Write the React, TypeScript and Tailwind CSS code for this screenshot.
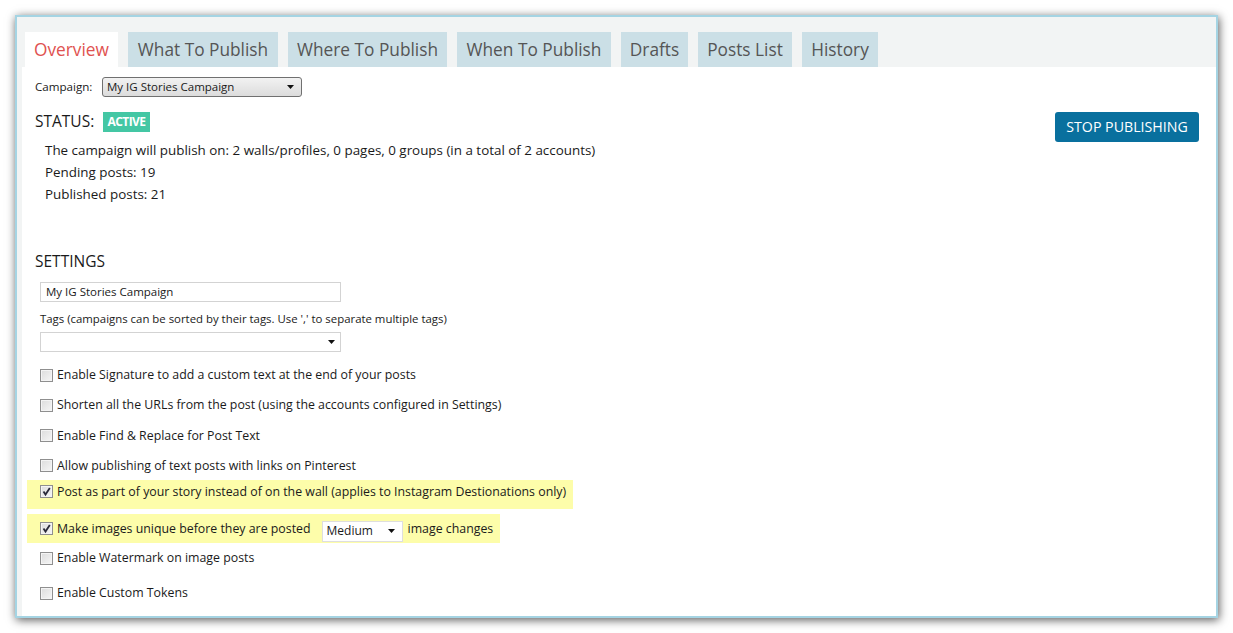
import React from "react";

const FONT = { fontFamily: '"Open Sans", "Noto Sans", sans-serif' };

function Checkbox({ checked = false }: { checked?: boolean }) {
  return (
    <span className="relative inline-block w-[13px] h-[13px] shrink-0 border border-[#8f8f8f] bg-gradient-to-br from-[#dcdcdc] to-[#f6f6f6] shadow-[inset_0_0_0_1px_#f4f4f4]">
      {checked && (
        <svg viewBox="0 0 13 13" className="absolute left-[-1px] top-[-1px] w-[13px] h-[13px]">
          <path d="M3.5 6.5 L5.5 9.5 L9.8 3" fill="none" stroke="#2a2a3a" strokeWidth="1.8" />
        </svg>
      )}
    </span>
  );
}

function Arrow() {
  return (
    <svg width="7" height="4" viewBox="0 0 7 4" className="shrink-0">
      <path d="M0 0 H7 L3.5 4 Z" fill="#111" />
    </svg>
  );
}

const tabs = [
  { label: "What To Publish", w: "w-[150px]" },
  { label: "Where To Publish", w: "w-[159px]" },
  { label: "When To Publish", w: "w-[154px]" },
  { label: "Drafts", w: "w-[67px]" },
  { label: "Posts List", w: "w-[94px]" },
  { label: "History", w: "w-[76px]" },
];

function Row({ children, h }: { children: React.ReactNode; h: string }) {
  return <div className={`flex items-center pl-[13px] gap-[4px] ${h}`}>{children}</div>;
}

export default function App() {
  return (
    <div className="w-[1233px] h-[633px] bg-white overflow-hidden pt-[15px] pl-[15px]" style={FONT}>
      <div className="w-[1203px] h-[603px] border-2 border-[#a5d4e3] shadow-[1px_2px_9px_rgba(0,0,0,0.65)] flex flex-col bg-white">
        {/* Tab bar */}
        <div className="h-[50px] shrink-0 bg-[#f2f4f4] flex items-end pl-[8px] gap-[10px]">
          <div className="w-[93px] h-[35px] bg-white flex items-center justify-center text-[17.3px] text-[#df5250]">
            Overview
          </div>
          {tabs.map((t) => (
            <div
              key={t.label}
              className={`${t.w} h-[35px] bg-[#cbdfe6] flex items-center justify-center text-[17.3px] text-[#555555] whitespace-nowrap`}
            >
              {t.label}
            </div>
          ))}
        </div>

        {/* Content */}
        <div className="flex-1 border-l-[5px] border-[#f2f4f4] text-[#1a1a1a]">
          <div className="pl-[13px] pt-[10px]">
            <div className="flex items-center h-[20px] text-[11.6px]">
              <span className="w-[67px]">Campaign:</span>
              <div className="w-[200px] h-[20px] rounded-[3px] border border-[#707070] bg-gradient-to-b from-[#f2f2f2] to-[#dcdcdc] flex items-center justify-between pl-[4px] pr-[7px]">
                <span className="text-[11.5px] leading-none">My IG Stories Campaign</span>
                <Arrow />
              </div>
            </div>

            <div className="flex justify-between items-start mt-[15px] pr-[17px]">
              <div>
                <div className="flex items-center h-[20px]">
                  <span className="text-[15.5px] w-[68px]">STATUS:</span>
                  <span className="h-[20px] w-[47px] bg-[#44c7a4] text-white font-bold text-[12px] flex items-center justify-center tracking-[-0.6px]">
                    ACTIVE
                  </span>
                </div>
                <div className="mt-[7px] pl-[10px] text-[13.4px] leading-[22px]">
                  <div>The campaign will publish on: 2 walls/profiles, 0 pages, 0 groups (in a total of 2 accounts)</div>
                  <div>Pending posts: 19</div>
                  <div>Published posts: 21</div>
                </div>
              </div>
              <button className="w-[144px] h-[30px] rounded-[3px] bg-[#09709e] text-white text-[14.2px] flex items-center justify-center">
                STOP PUBLISHING
              </button>
            </div>

            <div className="mt-[46px] text-[15.5px] leading-[20px]">SETTINGS</div>
            <div className="ml-[5px] mt-[11px] w-[301px] h-[20px] border border-[#d3d3d3] flex items-center pl-[5px] text-[11.5px]">
              My IG Stories Campaign
            </div>
            <div className="ml-[5px] mt-[9px] text-[11.4px] leading-[16px]">
              Tags (campaigns can be sorted by their tags. Use ',' to separate multiple tags)
            </div>
            <div className="ml-[5px] mt-[5px] w-[301px] h-[20px] border border-[#d3d3d3] flex items-center justify-end pr-[5px]">
              <Arrow />
            </div>
          </div>

          <div className="ml-[5px] mt-[8px] text-[12.35px] leading-[16px]">
            <Row h="h-[30px]">
              <Checkbox />
              <span>Enable Signature to add a custom text at the end of your posts</span>
            </Row>
            <Row h="h-[30px]">
              <Checkbox />
              <span>Shorten all the URLs from the post (using the accounts configured in Settings)</span>
            </Row>
            <Row h="h-[31px]">
              <Checkbox />
              <span>Enable Find &amp; Replace for Post Text</span>
            </Row>
            <Row h="h-[29px]">
              <Checkbox />
              <span>Allow publishing of text posts with links on Pinterest</span>
            </Row>
            <div className="w-[546px] h-[29px] bg-[#fdfdaa]">
              <Row h="h-[23px]">
                <Checkbox checked />
                <span>Post as part of your story instead of on the wall (applies to Instagram Destionations only)</span>
              </Row>
            </div>
            <div className="w-[473px] h-[29px] bg-[#fdfdaa] mt-[5px] flex items-center pl-[13px] gap-[4px]">
              <Checkbox checked />
              <span>Make images unique before they are posted</span>
              <div className="ml-[7px] mt-[5px] w-[81px] h-[21px] border border-[#dedede] bg-white flex items-center justify-between pl-[4px] pr-[7px] text-[12px]">
                <span>Medium</span>
                <Arrow />
              </div>
              <span className="ml-[1px]">image changes</span>
            </div>
            <Row h="h-[30px]">
              <Checkbox />
              <span>Enable Watermark on image posts</span>
            </Row>
            <div className="mt-[5px]">
              <Row h="h-[30px]">
                <Checkbox />
                <span>Enable Custom Tokens</span>
              </Row>
            </div>
          </div>
        </div>
      </div>
    </div>
  );
}
